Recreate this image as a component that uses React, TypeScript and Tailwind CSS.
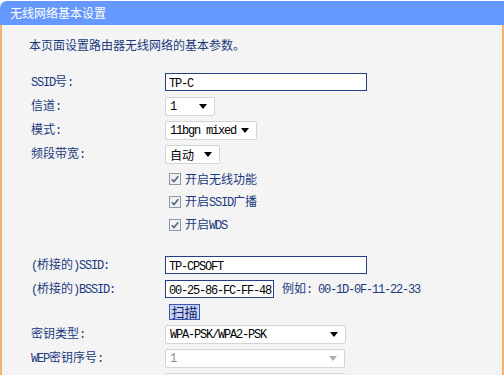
import type { ReactNode } from "react";

const navy = "text-[#1b3a7e]";

// SimSun-like: ascii runs get a narrow mono look, cjk stays full width
function Txt({ s }: { s: string }) {
  const parts = s.split(/([\x20-\x7e]+)/).filter(Boolean);
  return (
    <>
      {parts.map((p, i) =>
        /^[\x20-\x7e]+$/.test(p) ? (
          <span key={i} className="font-['Liberation_Mono',monospace] tracking-[-1.2px] whitespace-pre">
            {p}
          </span>
        ) : (
          <span key={i}>{p}</span>
        )
      )}
    </>
  );
}

function Row({ label, h = "h-[24px]", children }: { label?: string; h?: string; children: ReactNode }) {
  return (
    <div className={`flex items-center ${h}`}>
      <div className={`w-[134px] shrink-0 ${navy}`}>{label && <Txt s={label} />}</div>
      {children}
    </div>
  );
}

function TextBox({ value, w }: { value: string; w: string }) {
  return (
    <div className={`${w} h-[18px] border border-[#233f86] bg-white pl-[3px] leading-[16px] text-black`}>
      <Txt s={value} />
    </div>
  );
}

function Select({ value, w, disabled = false }: { value: string; w: string; disabled?: boolean }) {
  return (
    <div
      className={`${w} h-[19px] border border-[#d4d4d4] rounded-[2px] bg-white flex items-center justify-between pl-[4px] pr-[7px] ${
        disabled ? "text-[#8a8a8a]" : "text-black"
      }`}
    >
      <span className="leading-[17px]">
        <Txt s={value} />
      </span>
      <svg width="8" height="5" viewBox="0 0 8 5">
        <path d="M0 0h8L4 5z" fill={disabled ? "#b0b0b0" : "#000"} />
      </svg>
    </div>
  );
}

function Check({ label }: { label: string }) {
  return (
    <div className="flex items-center h-[23px] pl-[138px]">
      <svg width="12" height="12" viewBox="0 0 12 12" className="mr-[4px]">
        <rect x="0.5" y="0.5" width="11" height="11" fill="#eef0f4" stroke="#8e98ab" />
        <path d="M2.8 6.2l2.2 2.3 4.3-5.2" fill="none" stroke="#55606e" strokeWidth="1.5" />
      </svg>
      <span className={navy}>
        <Txt s={label} />
      </span>
    </div>
  );
}

export default function App() {
  return (
    <div className="w-[504px] h-[375px] overflow-hidden bg-white pt-px text-[12px] font-['Noto_Sans_CJK_SC',sans-serif]">
      <div className="h-[24px] bg-[#6699ff] rounded-tl-[7px] pl-[10px] text-white text-[12px] leading-[24px]">
        无线网络基本设置
      </div>
      <div className="h-[360px] bg-[#f4f4f4] border-l-2 border-r-2 border-[#f2b46a] pl-[29px]">
        <div className={`pt-[12px] -ml-[2px] leading-[16px] ${navy}`}>本页面设置路由器无线网络的基本参数。</div>

        <div className="mt-[17px]">
          <Row label="SSID号:">
            <TextBox value="TP-C" w="w-[202px]" />
          </Row>
          <Row label="信道:">
            <Select value="1" w="w-[50px]" />
          </Row>
          <Row label="模式:">
            <Select value="11bgn mixed" w="w-[92px]" />
          </Row>
          <Row label="频段带宽:">
            <Select value="自动" w="w-[55px]" />
          </Row>
        </div>

        <div className="mt-[1px]">
          <Check label="开启无线功能" />
          <Check label="开启SSID广播" />
          <Check label="开启WDS" />
        </div>

        <div className="mt-[17px]">
          <Row label="(桥接的)SSID:">
            <TextBox value="TP-CPSOFT" w="w-[202px]" />
          </Row>
          <Row label="(桥接的)BSSID:">
            <TextBox value="00-25-86-FC-FF-48" w="w-[109px]" />
            <span className={`ml-[8px] ${navy}`}>
              <Txt s="例如: 00-1D-0F-11-22-33" />
            </span>
          </Row>
          <Row h="h-[21px]">
            <button className="ml-[4px] w-[31px] h-[16px] border border-[#3a56b0] bg-[#c9d2f5] text-[#0d2366] text-[13px] leading-[14px] flex items-center justify-center">
              扫描
            </button>
          </Row>
          <Row label="密钥类型:">
            <Select value="WPA-PSK/WPA2-PSK" w="w-[181px]" />
          </Row>
          <Row label="WEP密钥序号:">
            <Select value="1" w="w-[180px]" disabled />
          </Row>
          <Row>
            <Select value="" w="w-[180px]" disabled />
          </Row>
        </div>
      </div>
    </div>
  );
}
